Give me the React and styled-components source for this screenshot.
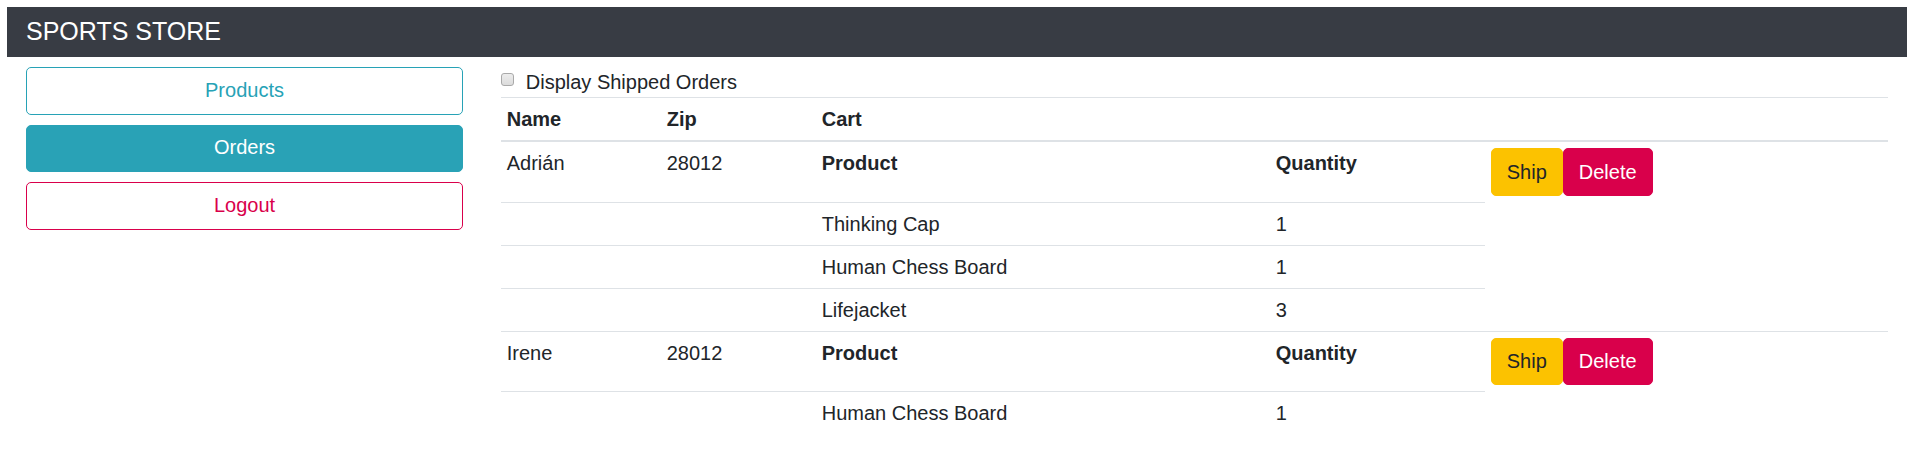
import React from "react";
import styled, { createGlobalStyle, css } from "styled-components";

const GlobalStyle = createGlobalStyle`
  html, body { margin: 0; padding: 0; background: #fff; }
  body {
    font-family: "Liberation Sans", Arial, Helvetica, sans-serif;
    font-size: 20px;
    line-height: 1.5;
    color: #212529;
  }
  * { box-sizing: border-box; }
`;

const Page = styled.div`
  padding: 7px;
`;

const Navbar = styled.header`
  display: flex;
  align-items: center;
  height: 50px;
  padding: 0 19px;
  background: #383c44;
  color: #fff;
`;

const Brand = styled.span`
  font-size: 25px;
  line-height: 1.5;
`;

const Main = styled.div`
  display: grid;
  grid-template-columns: 1fr 3fr;
  padding-top: 10px;
`;

const Sidebar = styled.nav`
  display: flex;
  flex-direction: column;
  gap: 10px;
  padding: 0 18.75px;
`;

const navVariants = {
  outlineInfo: css`
    background: #fff;
    color: #27a2b6;
    border-color: #27a2b6;
  `,
  info: css`
    background: #29a2b6;
    color: #fff;
    border-color: #29a2b6;
  `,
  outlineDanger: css`
    background: #fff;
    color: #d9004b;
    border-color: #d9004b;
  `,
};

const NavButton = styled.button`
  display: block;
  width: 100%;
  height: 47.5px;
  padding: 6.75px 15px 8.75px;
  border: 1px solid transparent;
  border-radius: 5px;
  font-family: inherit;
  font-size: 20px;
  line-height: 1.5;
  text-align: center;
  cursor: pointer;
  ${(p) => navVariants[p.$variant]}
`;

const Content = styled.section`
  padding: 0 18.75px;
`;

const CheckRow = styled.label`
  display: flex;
  align-items: flex-start;
  gap: 12px;
  height: 30px;
`;

const CheckBox = styled.input`
  appearance: none;
  width: 13px;
  height: 13px;
  margin: 6px 0 0 0;
  flex: none;
  border: 1px solid #a9a9a9;
  border-radius: 3px;
  background: linear-gradient(#ececec, #dcdcdc);
`;

const Table = styled.table`
  width: 100%;
  border-collapse: collapse;
  table-layout: fixed;
`;

const Th = styled.th`
  padding: 6px;
  text-align: left;
  font-weight: 700;
  vertical-align: bottom;
  border-top: 1px solid #dee2e6;
  border-bottom: 2px solid #dee2e6;
`;

const Td = styled.td`
  padding: 6px;
  vertical-align: top;
  border-top: ${(p) => (p.$open ? "none" : "1px solid #dee2e6")};
  font-weight: ${(p) => (p.$bold ? 700 : 400)};
`;

const actionVariants = {
  warning: css`
    background: #fcc200;
    border-color: #fcc200;
    color: #212529;
  `,
  danger: css`
    background: #d9004b;
    border-color: #d9004b;
    color: #fff;
  `,
};

const ActionButton = styled.button`
  display: inline-block;
  height: 47.5px;
  margin-bottom: 0.5px;
  padding: 7.5px 15px;
  border: 1px solid transparent;
  border-radius: 5px;
  font-family: inherit;
  font-size: 20px;
  line-height: 1.5;
  vertical-align: top;
  cursor: pointer;
  ${(p) => actionVariants[p.$variant]}
`;

const orders = [
  {
    id: 1,
    name: "Adrián",
    zip: "28012",
    items: [
      { product: "Thinking Cap", quantity: 1 },
      { product: "Human Chess Board", quantity: 1 },
      { product: "Lifejacket", quantity: 3 },
    ],
  },
  {
    id: 2,
    name: "Irene",
    zip: "28012",
    items: [{ product: "Human Chess Board", quantity: 1 }],
  },
];

function OrderRows({ order }) {
  return (
    <>
      <tr>
        <Td>{order.name}</Td>
        <Td>{order.zip}</Td>
        <Td $bold>Product</Td>
        <Td $bold>Quantity</Td>
        <Td>
          <ActionButton $variant="warning">Ship</ActionButton>
          <ActionButton $variant="danger">Delete</ActionButton>
        </Td>
      </tr>
      {order.items.map((item) => (
        <tr key={item.product}>
          <Td />
          <Td />
          <Td>{item.product}</Td>
          <Td>{item.quantity}</Td>
          <Td $open />
        </tr>
      ))}
    </>
  );
}

export default function App() {
  return (
    <>
      <GlobalStyle />
      <Page>
        <Navbar>
          <Brand>SPORTS STORE</Brand>
        </Navbar>
        <Main>
          <Sidebar>
            <NavButton $variant="outlineInfo">Products</NavButton>
            <NavButton $variant="info">Orders</NavButton>
            <NavButton $variant="outlineDanger">Logout</NavButton>
          </Sidebar>
          <Content>
            <CheckRow>
              <CheckBox type="checkbox" />
              <span>Display Shipped Orders</span>
            </CheckRow>
            <Table>
              <colgroup>
                <col style={{ width: 160 }} />
                <col style={{ width: 155 }} />
                <col style={{ width: 454 }} />
                <col style={{ width: 215 }} />
                <col />
              </colgroup>
              <thead>
                <tr>
                  <Th>Name</Th>
                  <Th>Zip</Th>
                  <Th colSpan={2}>Cart</Th>
                  <Th />
                </tr>
              </thead>
              <tbody>
                {orders.map((o) => (
                  <OrderRows key={o.id} order={o} />
                ))}
              </tbody>
            </Table>
          </Content>
        </Main>
      </Page>
    </>
  );
}
